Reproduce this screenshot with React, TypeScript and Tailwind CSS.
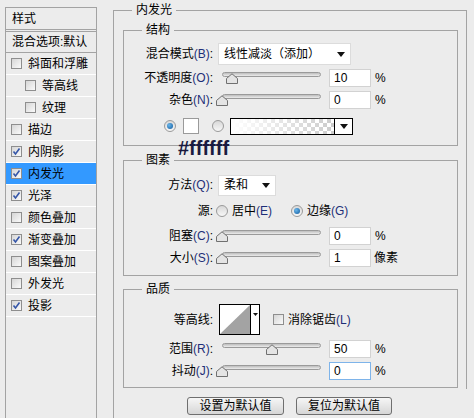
import React from 'react';

const layers = [
  { name: '斜面和浮雕', on: false },
  { name: '等高线', on: false, sub: true },
  { name: '纹理', on: false, sub: true },
  { name: '描边', on: false },
  { name: '内阴影', on: true },
  { name: '内发光', on: true, active: true },
  { name: '光泽', on: true },
  { name: '颜色叠加', on: false },
  { name: '渐变叠加', on: true },
  { name: '图案叠加', on: false },
  { name: '外发光', on: false },
  { name: '投影', on: true },
];

const Check = ({ on }: { on: boolean }) => (
  <div className="flex h-[11px] w-[11px] shrink-0 items-center justify-center border border-[#8e8e8e] bg-gradient-to-br from-[#d6d6d6] to-[#fafafa]">
    {on && (
      <svg width="9" height="9" viewBox="0 0 9 9">
        <path d="M1.5 4.5 L3.5 7 L7.5 1.5" fill="none" stroke="#3556a8" strokeWidth="1.6" />
      </svg>
    )}
  </div>
);

const Radio = ({ on }: { on: boolean }) => (
  <div className="flex h-[12px] w-[12px] shrink-0 items-center justify-center rounded-full border border-[#9a9a9a] bg-gradient-to-b from-[#d8d8d8] to-[#f7f7f7]">
    {on && <div className="h-[6px] w-[6px] rounded-full bg-[radial-gradient(circle_at_35%_35%,#6ab6ea,#0f5a9e)]" />}
  </div>
);

const Label = ({ zh, k }: { zh: string; k?: string }) => (
  <div className="w-[89px] shrink-0 text-right">
    {zh}
    {k && <span className="text-[#1e2f78]">({k})</span>}:
  </div>
);

const Slider = ({ value }: { value: number }) => (
  <div className="relative ml-[5px] h-[12px] w-[104px] shrink-0">
    <div className="absolute left-[4px] top-0 h-[5px] w-[99px] rounded-full border border-[#9a9a9a] bg-gradient-to-b from-[#bdbdbd] to-[#ececec]" />
    <svg className="absolute top-[1px]" style={{ left: value * 99 - 2 }} width="12" height="11" viewBox="0 0 12 11">
      <path d="M0.5 10.5 V5.5 L6 0.8 L11.5 5.5 V10.5 Z" fill="#e4e4e4" stroke="#707070" />
    </svg>
  </div>
);

const NumBox = ({ v, focus }: { v: string; focus?: boolean }) => (
  <div
    className={`ml-[7px] flex h-[18px] w-[42px] shrink-0 items-center border bg-white pl-[4px] ${
      focus ? 'border-[#7eb4ea]' : 'border-[#d2d2d2]'
    }`}
  >
    {v}
  </div>
);

const Arrow = () => (
  <svg width="8" height="5" viewBox="0 0 8 5">
    <path d="M0 0 H8 L4 5 Z" fill="#111" />
  </svg>
);

const Group = ({ title, className, children }: { title: string; className?: string; children: React.ReactNode }) => (
  <fieldset className={`relative ml-[9px] w-[335px] border border-[#a3a3a3] ${className ?? ''}`}>
    <legend className="ml-[18px] px-[4px] leading-[16px]">{title}</legend>
    {children}
  </fieldset>
);

export default function App() {
  return (
    <div className="flex h-[418px] w-[474px] overflow-hidden bg-[#ececec] text-[12px] text-black font-['Liberation_Sans','Noto_Sans_CJK_SC',sans-serif]">
      {/* layer list */}
      <div className="ml-[5px] mt-[7px] flex w-[92px] flex-col self-stretch border border-b-0 border-[#a3a3a3]">
        <div className="flex h-[22px] items-center border-b border-[#a3a3a3] pl-[6px]">样式</div>
        <div className="h-[1px]" />
        <div className="flex h-[22px] items-center border-y border-[#a3a3a3] pl-[6px]">混合选项:默认</div>
        {layers.map((l) => (
          <div
            key={l.name}
            className={`flex h-[22px] items-center gap-[6px] border-b border-white ${l.sub ? 'pl-[19px]' : 'pl-[5px]'} ${
              l.active ? 'bg-[#3399ff]' : ''
            }`}
          >
            <Check on={l.on} />
            <span>{l.name}</span>
          </div>
        ))}
      </div>

      {/* settings */}
      <div className="ml-[16px] flex w-[354px] flex-col self-stretch">
        <fieldset className="mt-[2px] border border-b-0 border-[#a3a3a3] pb-[1px]">
          <legend className="ml-[18px] px-[4px] leading-[16px]">内发光</legend>

          <Group title="结构" className="mt-[4px] pb-[8px]">
            <div className="mt-[5px] flex h-[22px] items-center">
              <Label zh="混合模式" k="B" />
              <div className="ml-[5px] flex h-[22px] w-[133px] items-center justify-between border border-[#dcdcdc] bg-white pl-[5px] pr-[5px]">
                <span>线性减淡（添加）</span>
                <Arrow />
              </div>
            </div>
            <div className="mt-[2px] flex h-[22px] items-center">
              <Label zh="不透明度" k="O" />
              <Slider value={0.1} />
              <NumBox v="10" />
              <span className="ml-[4px]">%</span>
            </div>
            <div className="flex h-[22px] items-center">
              <Label zh="杂色" k="N" />
              <Slider value={0} />
              <NumBox v="0" />
              <span className="ml-[4px]">%</span>
            </div>
            <div className="mt-[4px] flex h-[22px] items-center">
              <div className="ml-[40px]">
                <Radio on />
              </div>
              <div className="ml-[7px] h-[16px] w-[16px] border border-[#9a9a9a] bg-white" />
              <div className="ml-[13px]">
                <Radio on={false} />
              </div>
              <div className="ml-[6px] flex h-[17px] w-[123px] border border-black">
                <svg className="flex-1" height="15" viewBox="0 0 103 15" preserveAspectRatio="none">
                  <defs>
                    <pattern id="chk" width="8" height="8" patternUnits="userSpaceOnUse">
                      <rect width="8" height="8" fill="#ffffff" />
                      <rect width="4" height="4" fill="#cccccc" />
                      <rect x="4" y="4" width="4" height="4" fill="#cccccc" />
                    </pattern>
                    <linearGradient id="fade" x1="0" x2="1" y1="0" y2="0">
                      <stop offset="0" stopColor="#fff" stopOpacity="1" />
                      <stop offset="1" stopColor="#fff" stopOpacity="0" />
                    </linearGradient>
                  </defs>
                  <rect width="103" height="15" fill="url(#chk)" />
                  <rect width="103" height="15" fill="url(#fade)" />
                </svg>
                <div className="flex w-[18px] items-center justify-center border-l border-black bg-white">
                  <Arrow />
                </div>
              </div>
            </div>
            <span className="absolute left-[54px] top-[100px] text-[20px] font-bold leading-none text-[#1a1a40]">#ffffff</span>
          </Group>

          <Group title="图素" className="mt-[6px] pb-[6px]">
            <div className="mt-[6px] flex h-[22px] items-center">
              <Label zh="方法" k="Q" />
              <div className="ml-[5px] flex h-[21px] w-[58px] items-center justify-between border border-[#dcdcdc] bg-white pl-[5px] pr-[5px]">
                <span>柔和</span>
                <Arrow />
              </div>
            </div>
            <div className="mt-[4px] flex h-[22px] items-center">
              <Label zh="源" />
              <div className="ml-[3px] flex w-[75px] items-center gap-[4px]">
                <Radio on={false} />
                <span>
                  居中<span className="text-[#1e2f78]">(E)</span>
                </span>
              </div>
              <div className="flex items-center gap-[4px]">
                <Radio on />
                <span>
                  边缘<span className="text-[#1e2f78]">(G)</span>
                </span>
              </div>
            </div>
            <div className="mt-[3px] flex h-[22px] items-center">
              <Label zh="阻塞" k="C" />
              <Slider value={0} />
              <NumBox v="0" />
              <span className="ml-[4px]">%</span>
            </div>
            <div className="flex h-[22px] items-center">
              <Label zh="大小" k="S" />
              <Slider value={0} />
              <NumBox v="1" />
              <span className="ml-[3px]">像素</span>
            </div>
          </Group>

          <Group title="品质" className="mt-[5px] pb-[5px]">
            <div className="mt-[7px] flex h-[31px] items-center">
              <Label zh="等高线" />
              <div className="ml-[6px] flex h-[31px] w-[41px] border border-black bg-white">
                <svg width="30" height="29" viewBox="0 0 30 29">
                  <path d="M0 29 L30 0 V29 Z" fill="#a3a3a3" />
                </svg>
                <div className="flex flex-1 items-start justify-center border-l border-black pt-[8px]">
                  <svg width="5" height="3" viewBox="0 0 5 3">
                    <path d="M0 0 H5 L2.5 3 Z" fill="#111" />
                  </svg>
                </div>
              </div>
              <div className="ml-[13px]">
                <Check on={false} />
              </div>
              <span className="ml-[4px]">
                消除锯齿<span className="text-[#1e2f78]">(L)</span>
              </span>
            </div>
            <div className="mt-[3px] flex h-[22px] items-center">
              <Label zh="范围" k="R" />
              <Slider value={0.5} />
              <NumBox v="50" />
              <span className="ml-[4px]">%</span>
            </div>
            <div className="flex h-[22px] items-center">
              <Label zh="抖动" k="J" />
              <Slider value={0} />
              <NumBox v="0" focus />
              <span className="ml-[4px]">%</span>
            </div>
          </Group>
        </fieldset>

        <div className="flex flex-1 gap-[12px] border-l border-[#a3a3a3] pl-[73px] pt-[8px]">
          <button className="flex h-[18px] w-[97px] items-center justify-center rounded-[3px] border border-[#6f6f6f] bg-gradient-to-b from-[#f6f6f6] to-[#d6d6d6]">
            设置为默认值
          </button>
          <button className="flex h-[18px] w-[96px] items-center justify-center rounded-[3px] border border-[#6f6f6f] bg-gradient-to-b from-[#f6f6f6] to-[#d6d6d6]">
            复位为默认值
          </button>
        </div>
      </div>
    </div>
  );
}
